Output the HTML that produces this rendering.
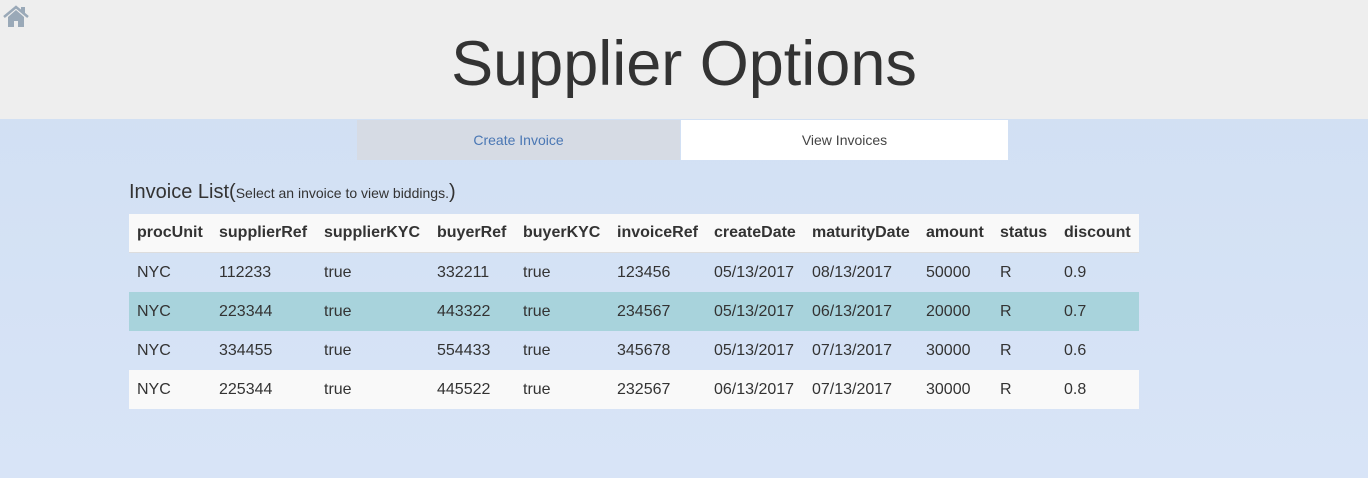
<!DOCTYPE html>
<html><head><style>
body{margin:0;width:1368px;height:478px;overflow:hidden;font-family:"Liberation Sans",sans-serif;background:linear-gradient(#d0dff2,#d8e4f7);position:relative;color:#333}
.hdr{position:absolute;left:0;top:0;width:1368px;height:119px;background:#eeeeee}
h1{position:absolute;left:0;width:1368px;top:29px;margin:0;text-align:center;font-weight:normal;font-size:63px;line-height:70px;color:#333}
.tab{position:absolute;top:120px;height:40px;line-height:40px;text-align:center;font-size:14px}
.t1{left:357px;width:323px;background:#d6dbe4;color:#4a77b4}
.t2{left:681px;width:327px;background:#fff;color:#444}
.title{position:absolute;left:129px;top:181px;font-size:20px}
.title small{font-size:14px}
table{position:absolute;left:129px;top:214px;width:1010px;border-collapse:collapse;font-size:16px}
td,th{text-align:left;padding:0 0 0 8px;height:39px;white-space:nowrap}
th{height:38px;border-bottom:1px solid #ddd}
tr.w{background:#f9f9f9}tr.h{background:#a8d3dc}
</style></head><body>
<div class="hdr"></div>
<svg style="position:absolute;left:3px;top:5px" width="26" height="22" viewBox="0 0 26 22"><path d="M1 12 L13 2 L25 12" fill="none" stroke="#9aa9b8" stroke-width="2.5"/><rect x="18" y="2" width="4" height="6" fill="#9aa9b8"/><path d="M5 12 L13 5 L21 12 V22 H15 V16 H11 V22 H5Z" fill="#9aa9b8"/></svg>
<h1>Supplier Options</h1>
<div class="tab t1">Create Invoice</div><div class="tab t2">View Invoices</div>
<div class="title">Invoice List(<small>Select an invoice to view biddings.</small>)</div>
<table>
<tr class="w"><th style="width:74px">procUnit</th><th style="width:97px">supplierRef</th><th style="width:105px">supplierKYC</th><th style="width:78px">buyerRef</th><th style="width:86px">buyerKYC</th><th style="width:89px">invoiceRef</th><th style="width:90px">createDate</th><th style="width:106px">maturityDate</th><th style="width:66px">amount</th><th style="width:56px">status</th><th>discount</th></tr>
<tr><td>NYC</td><td>112233</td><td>true</td><td>332211</td><td>true</td><td>123456</td><td>05/13/2017</td><td>08/13/2017</td><td>50000</td><td>R</td><td>0.9</td></tr>
<tr class="h"><td>NYC</td><td>223344</td><td>true</td><td>443322</td><td>true</td><td>234567</td><td>05/13/2017</td><td>06/13/2017</td><td>20000</td><td>R</td><td>0.7</td></tr>
<tr><td>NYC</td><td>334455</td><td>true</td><td>554433</td><td>true</td><td>345678</td><td>05/13/2017</td><td>07/13/2017</td><td>30000</td><td>R</td><td>0.6</td></tr>
<tr class="w"><td>NYC</td><td>225344</td><td>true</td><td>445522</td><td>true</td><td>232567</td><td>06/13/2017</td><td>07/13/2017</td><td>30000</td><td>R</td><td>0.8</td></tr>
</table>
</body></html>
